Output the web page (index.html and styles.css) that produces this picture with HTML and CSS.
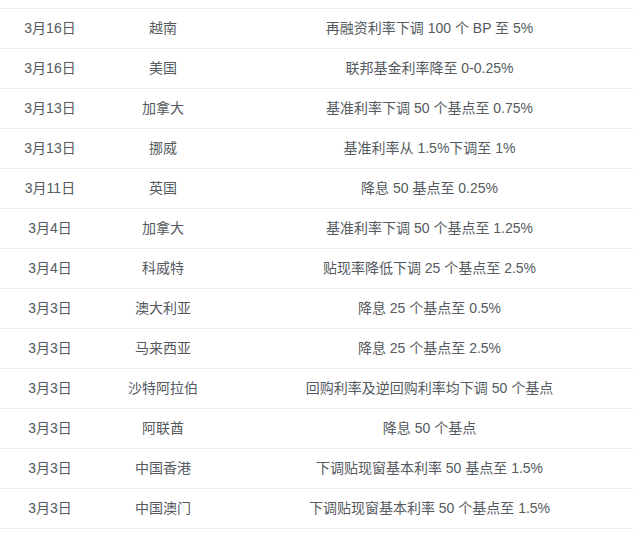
FILE: index.html
```html
<!DOCTYPE html>
<html lang="zh-CN">
<head>
<meta charset="utf-8">
<link rel="stylesheet" href="styles.css">
</head>
<body>
<div class="table">
  <div class="lead"></div>
  <div class="row"><span>3月16日</span><span>越南</span><span>再融资利率下调 100 个 BP 至 5%</span></div>
  <div class="row"><span>3月16日</span><span>美国</span><span>联邦基金利率降至 0-0.25%</span></div>
  <div class="row"><span>3月13日</span><span>加拿大</span><span>基准利率下调 50 个基点至 0.75%</span></div>
  <div class="row"><span>3月13日</span><span>挪威</span><span>基准利率从 1.5%下调至 1%</span></div>
  <div class="row"><span>3月11日</span><span>英国</span><span>降息 50 基点至 0.25%</span></div>
  <div class="row"><span>3月4日</span><span>加拿大</span><span>基准利率下调 50 个基点至 1.25%</span></div>
  <div class="row"><span>3月4日</span><span>科威特</span><span>贴现率降低下调 25 个基点至 2.5%</span></div>
  <div class="row"><span>3月3日</span><span>澳大利亚</span><span>降息 25 个基点至 0.5%</span></div>
  <div class="row"><span>3月3日</span><span>马来西亚</span><span>降息 25 个基点至 2.5%</span></div>
  <div class="row"><span>3月3日</span><span>沙特阿拉伯</span><span>回购利率及逆回购利率均下调 50 个基点</span></div>
  <div class="row"><span>3月3日</span><span>阿联酋</span><span>降息 50 个基点</span></div>
  <div class="row"><span>3月3日</span><span>中国香港</span><span>下调贴现窗基本利率 50 基点至 1.5%</span></div>
  <div class="row"><span>3月3日</span><span>中国澳门</span><span>下调贴现窗基本利率 50 个基点至 1.5%</span></div>
  <div class="row faint"><span>3月3日</span><span>卡塔尔</span><span>回购利率及逆回购利率均下调 50 个基点至 1.5%</span></div>
</div>
</body>
</html>
```
FILE: styles.css
```css
html, body {
  margin: 0;
  padding: 0;
  background: #ffffff;
  overflow: hidden;
}
body {
  font-family: "Liberation Sans", "Noto Sans CJK SC", sans-serif;
  font-size: 14px;
  color: #545a60;
}
.table {
  display: flex;
  flex-direction: column;
}
.lead {
  height: 8px;
}
.row {
  display: grid;
  grid-template-columns: 100px 126px 1fr;
  height: 40px;
  box-sizing: border-box;
  border-top: 1px solid #ececee;
  align-items: center;
  text-align: center;
  line-height: 20px;
  padding-bottom: 2px;
}
.row span {
  white-space: nowrap;
}
.faint {
  color: #eef0f1;
}
```
